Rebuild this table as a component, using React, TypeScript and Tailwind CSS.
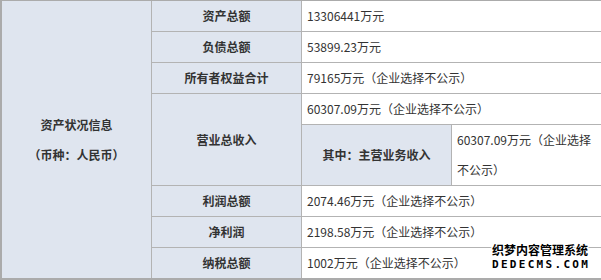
import React from "react";

const label = "bg-[#dfe5ef] text-[#333] font-bold flex items-center justify-center text-center";
const value = "bg-white text-[#333] px-[5px] flex items-center";

export default function App() {
  return (
    <div
      className="relative w-[601px] h-[280px] overflow-hidden bg-white text-[12px] leading-[30px]"
      style={{ fontFamily: '"Noto Sans CJK SC", "Noto Sans", sans-serif' }}
    >
      <div className="grid grid-cols-[149px_149px_149px_1fr] grid-rows-[30px_30px_30px_30px_60px_30px_30px_30px] gap-px bg-[#b3b3b3] border-l-2 border-t border-b-2 border-[#ababab]">
        <div className={`${label} row-span-8 flex-col font-bold`}>
          <div>资产状况信息</div>
          <div>（币种：人民币）</div>
        </div>

        <div className={label}>资产总额</div>
        <div className={`${value} col-span-2`}>13306441万元</div>

        <div className={label}>负债总额</div>
        <div className={`${value} col-span-2`}>53899.23万元</div>

        <div className={label}>所有者权益合计</div>
        <div className={`${value} col-span-2`}>79165万元（企业选择不公示）</div>

        <div className={`${label} row-span-2`}>营业总收入</div>
        <div className={`${value} col-span-2`}>60307.09万元（企业选择不公示）</div>
        <div className={label}>其中：主营业务收入</div>
        <div className={value}>60307.09万元（企业选择不公示）</div>

        <div className={label}>利润总额</div>
        <div className={`${value} col-span-2`}>2074.46万元（企业选择不公示）</div>

        <div className={label}>净利润</div>
        <div className={`${value} col-span-2`}>2198.58万元（企业选择不公示）</div>

        <div className={label}>纳税总额</div>
        <div className={`${value} col-span-2`}>1002万元（企业选择不公示）</div>
      </div>

      {/* watermark */}
      <div className="absolute left-[492px] top-[244px] w-[100px] leading-none text-black font-bold [text-shadow:1px_0_0_#fff,-1px_0_0_#fff,0_1px_0_#fff,0_-1px_0_#fff,1px_1px_0_#fff,-1px_-1px_0_#fff,1px_-1px_0_#fff,-1px_1px_0_#fff]">
        <div className="text-[12px] tracking-[0px] whitespace-nowrap">织梦内容管理系统</div>
        <div
          className="text-[11px] tracking-[2.3px] mt-[3px] whitespace-nowrap"
          style={{ fontFamily: '"DejaVu Sans Mono", monospace' }}
        >
          DEDECMS.COM
        </div>
      </div>
    </div>
  );
}
